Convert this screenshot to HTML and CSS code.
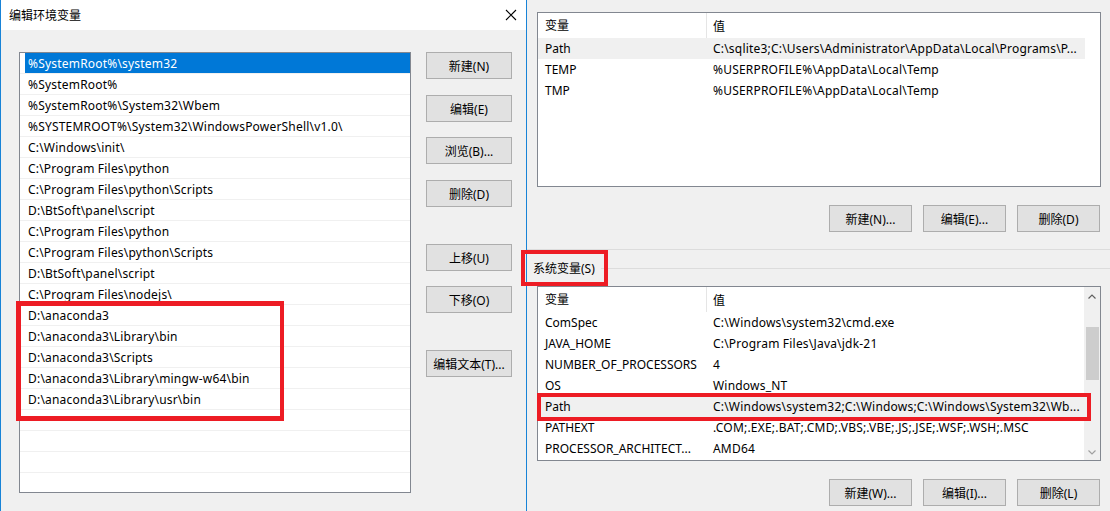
FILE: index.html
```html
<!DOCTYPE html>
<html lang="zh-CN">
<head>
<meta charset="utf-8">
<title>编辑环境变量</title>
<link rel="stylesheet" href="styles.css">
</head>
<body>
<div class="screen">
  <div class="dialog">
    <div class="titlebar">
      <span class="title">编辑环境变量</span>
      <svg class="close" width="12" height="12" viewBox="0 0 12 12"><path d="M1 1 L11 11 M11 1 L1 11" stroke="#000" stroke-width="1.1" fill="none"/></svg>
    </div>
    <div class="dlg-body">
      <div class="pathlist">
        <div class="prow sel"><div class="pcell">%SystemRoot%\system32</div></div>
        <div class="prow"><div class="pcell">%SystemRoot%</div></div>
        <div class="prow"><div class="pcell">%SystemRoot%\System32\Wbem</div></div>
        <div class="prow"><div class="pcell">%SYSTEMROOT%\System32\WindowsPowerShell\v1.0\</div></div>
        <div class="prow"><div class="pcell">C:\Windows\init\</div></div>
        <div class="prow"><div class="pcell">C:\Program Files\python</div></div>
        <div class="prow"><div class="pcell">C:\Program Files\python\Scripts</div></div>
        <div class="prow"><div class="pcell">D:\BtSoft\panel\script</div></div>
        <div class="prow"><div class="pcell">C:\Program Files\python</div></div>
        <div class="prow"><div class="pcell">C:\Program Files\python\Scripts</div></div>
        <div class="prow"><div class="pcell">D:\BtSoft\panel\script</div></div>
        <div class="prow"><div class="pcell">C:\Program Files\nodejs\</div></div>
        <div class="prow"><div class="pcell">D:\anaconda3</div></div>
        <div class="prow"><div class="pcell">D:\anaconda3\Library\bin</div></div>
        <div class="prow"><div class="pcell">D:\anaconda3\Scripts</div></div>
        <div class="prow"><div class="pcell">D:\anaconda3\Library\mingw-w64\bin</div></div>
        <div class="prow"><div class="pcell">D:\anaconda3\Library\usr\bin</div></div>
        <div class="prow"><div class="pcell"></div></div>
        <div class="prow"><div class="pcell"></div></div>
        <div class="prow"><div class="pcell"></div></div>
        <div class="prow"><div class="pcell"></div></div>
      </div>
      <div class="btncol">
        <div class="btn">新建(N)</div>
        <div class="btn m16">编辑(E)</div>
        <div class="btn m15">浏览(B)...</div>
        <div class="btn m16">删除(D)</div>
        <div class="btn m37">上移(U)</div>
        <div class="btn m15">下移(O)</div>
        <div class="btn m37">编辑文本(T)...</div>
      </div>
    </div>
  </div>

  <div class="envwin">
    <div class="lv">
      <div class="lv-main">
        <div class="lv-head"><div class="c1">变量</div><div class="c2">值</div></div>
        <div class="lv-row hl"><div class="c1">Path</div><div class="c2">C:\sqlite3;C:\Users\Administrator\AppData\Local\Programs\P...</div></div>
        <div class="lv-row"><div class="c1">TEMP</div><div class="c2">%USERPROFILE%\AppData\Local\Temp</div></div>
        <div class="lv-row"><div class="c1">TMP</div><div class="c2">%USERPROFILE%\AppData\Local\Temp</div></div>
      </div>
      <div class="lv-gutter"></div>
    </div>
    <div class="btnrow">
      <div class="btn wbtn">新建(N)...</div>
      <div class="btn wbtn">编辑(E)...</div>
      <div class="btn wbtn">删除(D)</div>
    </div>
    <div class="sep"></div>
    <div class="grouplabel"><span>系统变量(S)</span><div class="gline"></div></div>
    <div class="lv">
      <div class="lv-main">
        <div class="lv-head"><div class="c1">变量</div><div class="c2">值</div></div>
        <div class="lv-row"><div class="c1">ComSpec</div><div class="c2">C:\Windows\system32\cmd.exe</div></div>
        <div class="lv-row"><div class="c1">JAVA_HOME</div><div class="c2">C:\Program Files\Java\jdk-21</div></div>
        <div class="lv-row"><div class="c1">NUMBER_OF_PROCESSORS</div><div class="c2">4</div></div>
        <div class="lv-row"><div class="c1">OS</div><div class="c2">Windows_NT</div></div>
        <div class="lv-row hl"><div class="c1">Path</div><div class="c2">C:\Windows\system32;C:\Windows;C:\Windows\System32\Wb...</div></div>
        <div class="lv-row"><div class="c1">PATHEXT</div><div class="c2">.COM;.EXE;.BAT;.CMD;.VBS;.VBE;.JS;.JSE;.WSF;.WSH;.MSC</div></div>
        <div class="lv-row"><div class="c1">PROCESSOR_ARCHITECT...</div><div class="c2">AMD64</div></div>
      </div>
      <div class="vscroll">
        <svg class="arrow" width="16" height="16" viewBox="0 0 16 16"><path d="M4.5 9.5 L8 6 L11.5 9.5" stroke="#606060" stroke-width="1.2" fill="none"/></svg>
        <div class="track"><div class="thumb"></div></div>
        <svg class="arrow" width="16" height="16" viewBox="0 0 16 16"><path d="M4.5 6.5 L8 10 L11.5 6.5" stroke="#a0a0a0" stroke-width="1.2" fill="none"/></svg>
      </div>
    </div>
    <div class="btnrow">
      <div class="btn wbtn">新建(W)...</div>
      <div class="btn wbtn">编辑(I)...</div>
      <div class="btn wbtn">删除(L)</div>
    </div>
  </div>

  <div class="mark mark-paths"></div>
  <div class="mark mark-group"></div>
  <div class="mark mark-row"></div>
</div>
</body>
</html>
```

FILE: styles.css
```css
* { box-sizing: border-box; }
html, body { margin: 0; padding: 0; }
body {
  width: 1110px;
  height: 511px;
  overflow: hidden;
  background: #f0f0f0;
  font-family: "Noto Sans", "Noto Sans CJK SC", sans-serif;
  font-size: 12px;
  color: #000;
}
.screen {
  position: relative;
  display: flex;
  width: 1110px;
  height: 511px;
}

/* left dialog */
.dialog {
  width: 527px;
  height: 511px;
  border-left: 1px solid #1883d7;
  border-right: 1px solid #1883d7;
  background: #f0f0f0;
  display: flex;
  flex-direction: column;
}
.titlebar {
  height: 30px;
  background: #fff;
  display: flex;
  align-items: center;
  justify-content: space-between;
  padding: 0 9px 0 8px;
}
.title { font-size: 12px; }
.close { display: block; }
.dlg-body {
  display: flex;
  align-items: flex-start;
  padding: 22px 0 0 18px;
}
.pathlist {
  width: 392px;
  height: 441px;
  border: 1px solid #828790;
  background: #fff;
  overflow: hidden;
}
.prow {
  height: 21px;
  border-bottom: 1px solid #f0f0f0;
  padding-left: 5px;
}
.pcell {
  height: 20px;
  line-height: 21px;
  padding-left: 3px;
  white-space: nowrap;
  letter-spacing: 0.2px;
}
.prow.sel .pcell { background: #0078d7; color: #fff; }

.btncol {
  display: flex;
  flex-direction: column;
  margin-left: 15px;
}
.btn {
  width: 86px;
  height: 27px;
  background: #e1e1e1;
  border: 1px solid #adadad;
  display: flex;
  align-items: center;
  justify-content: center;
  white-space: nowrap;
}
.btncol .m15 { margin-top: 15px; }
.btncol .m16 { margin-top: 16px; }
.btncol .m37 { margin-top: 37px; }

/* right window */
.envwin {
  flex: 1;
  display: flex;
  flex-direction: column;
  padding: 12px 9px 0 10px;
}
.lv {
  height: 175px;
  border: 1px solid #828790;
  background: #fff;
  display: flex;
}
.lv-main { flex: 1; overflow: hidden; }
.lv-gutter { width: 15px; }
.lv-head {
  height: 25px;
  display: flex;
  align-items: center;
}
.lv-head .c1 { border-right: 1px solid #e5e5e5; height: 25px; line-height: 25px; }
.lv-row {
  height: 21px;
  display: flex;
  align-items: center;
}
.lv-row.hl { background: #f0f0f0; }
.c1 {
  width: 169px;
  padding-left: 7px;
  white-space: nowrap;
  overflow: hidden;
}
.c2 {
  flex: 1;
  padding-left: 6px;
  white-space: nowrap;
  overflow: hidden;
}
.lv-row .c2 { letter-spacing: 0.2px; }
.vscroll {
  width: 16px;
  background: #f0f0f0;
  display: flex;
  flex-direction: column;
}
.arrow { display: block; width: 16px; height: 16px; flex: none; }
.vscroll .arrow:first-child { margin-top: 2px; }
.track { flex: 1; padding: 22px 1px 0 2px; }
.thumb { height: 53px; background: #cdcdcd; }

.btnrow {
  display: flex;
  justify-content: flex-end;
  gap: 11px;
  margin-top: 18px;
  padding-right: 1px;
}
.wbtn { width: 83px; }
.sep {
  height: 1px;
  background: #dcdcdc;
  margin: 17px -9px 0 -10px;
}
.grouplabel {
  height: 36px;
  display: flex;
  align-items: center;
  margin-left: -4px;
  margin-right: -9px;
}
.gline { flex: 1; height: 1px; background: #dcdcdc; margin-left: 6px; }

/* red annotation marks */
.mark {
  position: absolute;
  border: 4px solid #ed1c24;
  pointer-events: none;
}
.mark-paths { left: 16px; top: 301px; width: 268px; height: 120px; border-width: 5px 4px 5px 5px; }
.mark-group { left: 521px; top: 250px; width: 87px; height: 36px; }
.mark-row { left: 537px; top: 393px; width: 554px; height: 28px; }
```
